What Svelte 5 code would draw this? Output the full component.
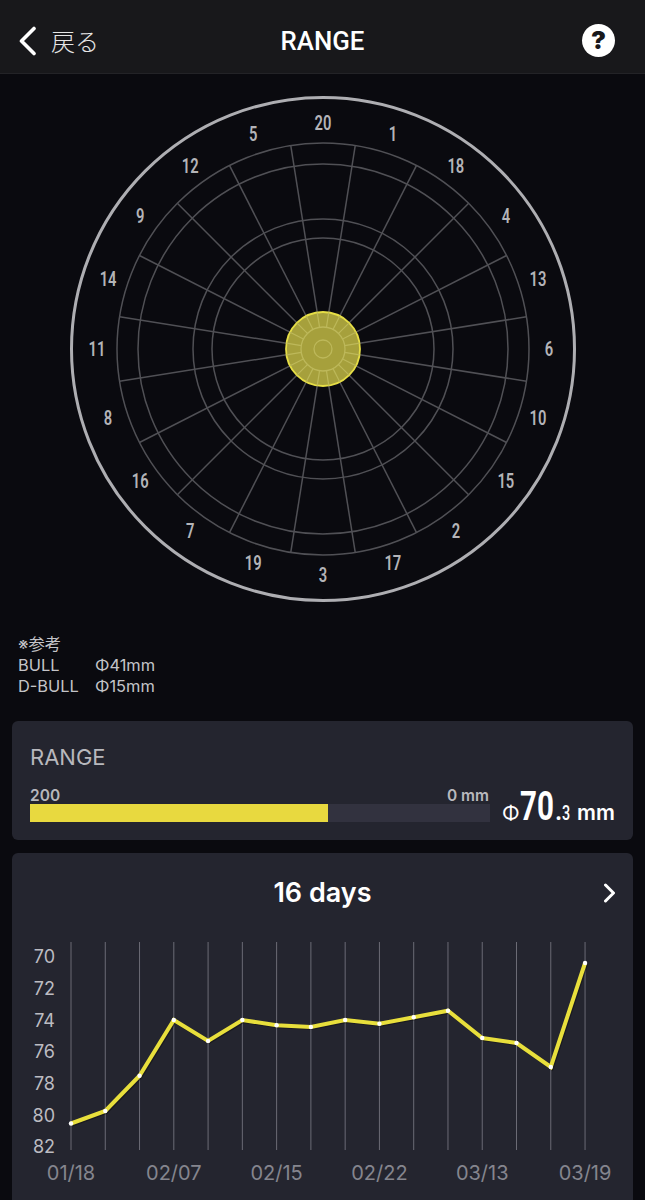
<script>
  const CX = 323, CY = 275;
  const numbers = [20,1,18,4,13,6,10,15,2,17,3,19,7,16,8,11,14,9,12,5];
  const polar = (r, deg) => {
    const a = (deg * Math.PI) / 180;
    return [+(CX + r * Math.sin(a)).toFixed(2), +(CY - r * Math.cos(a)).toFixed(2)];
  };
  const spokes = numbers.map((_, i) => {
    const d = 9 + i * 18;
    const [x1, y1] = polar(37, d);
    const [x2, y2] = polar(206, d);
    const [x3, y3] = polar(22, d);
    return { x1, y1, x2, y2, x3, y3 };
  });
  const labels = numbers.map((n, i) => {
    const [x, y] = polar(226, i * 18);
    return { n, x, y };
  });

  const ys = [1123.5,1111,1075.7,1020,1041,1020,1025.3,1027,1020,1023.7,1017.3,1010.7,1038,1043,1067,963];
  const OX = 59;
  const xAt = (i) => +(i * 34.27).toFixed(2) + OX;
  const points = ys.map((y, i) => ({ x: xAt(i), y: y - 930 }));
  const line = points.map((p) => `${p.x},${p.y}`).join(' ');
  const yLabels = [[70,957],[72,989],[74,1021],[76,1052],[78,1084],[80,1116],[82,1147]];
  const xLabels = [['01/18',0],['02/07',3],['02/15',6],['02/22',9],['03/13',12],['03/19',15]];
</script>

<div class="page">
  <header class="top">
    <button class="back">
      <svg width="20" height="30" viewBox="0 0 20 30"><path d="M16 2.5 3.5 15 16 27.500" fill="none" stroke="#fff" stroke-width="3.600" stroke-linecap="round" stroke-linejoin="round"/></svg>
      <span>戻る</span>
    </button>
    <h1>RANGE</h1>
    <div class="help">?</div>
  </header>

  <svg class="board" width="645" height="550" viewBox="0 0 645 550">
    <circle cx={CX} cy={CY} r="251.500" class="outer"/>
    {#each [206,185,130,111] as r}
      <circle cx={CX} cy={CY} {r} class="ring"/>
    {/each}
    {#each spokes as s}
      <line x1={s.x1} y1={s.y1} x2={s.x2} y2={s.y2} class="spoke"/>
    {/each}
    <circle cx={CX} cy={CY} r="37" class="bull"/>
    {#each spokes as s}
      <line x1={s.x3} y1={s.y3} x2={s.x1} y2={s.y1} class="bull-line"/>
    {/each}
    <circle cx={CX} cy={CY} r="22" class="bull-ring"/>
    <circle cx={CX} cy={CY} r="9" class="bull-ring"/>
    {#each labels as l}
      <text transform="translate({l.x} {l.y + 6.500}) scale(.72 1)" class="num">{l.n}</text>
    {/each}
  </svg>

  <section class="note">
    <div>※参考</div>
    <div class="row"><span>BULL</span><span>Φ41mm</span></div>
    <div class="row"><span>D-BULL</span><span>Φ15mm</span></div>
  </section>

  <section class="card range">
    <div class="title">RANGE</div>
    <div class="range-row">
      <div class="meter">
        <div class="scale"><span>200</span><span>0 mm</span></div>
        <div class="track"><div class="fill" style="width:64.800%"></div></div>
      </div>
      <div class="value">
        <span class="phi">Φ</span><span class="big">70</span><span class="dot">.</span><span class="small">3</span><span class="mm">mm</span>
      </div>
    </div>
  </section>

  <section class="card trend">
    <div class="trend-head">
      <span>16 days</span>
      <svg class="next" width="14" height="20" viewBox="0 0 14 20"><path d="M2.500 2 10.500 10 2.500 18" fill="none" stroke="#fff" stroke-width="3" stroke-linecap="round" stroke-linejoin="round"/></svg>
    </div>
    <svg class="chart" width="621" height="270" viewBox="0 0 621 270">
      {#each points as p}
        <line x1={p.x} x2={p.x} y1="12" y2="220" class="grid"/>
      {/each}
      <polyline points={line} class="shade"/>
      <polyline points={line} class="trace"/>
      {#each points as p}
        <circle cx={p.x} cy={p.y} r="2.200" class="pt"/>
      {/each}
      {#each yLabels as [v, y]}
        <text x="43" y={y - 930 + 5.500} class="ylab">{v}</text>
      {/each}
      {#each xLabels as [t, i]}
        <text x={xAt(i)} y="250" class="xlab">{t}</text>
      {/each}
    </svg>
  </section>
</div>

<style>
  :global(body) {
    margin: 0;
    background: #0a0a0f;
  }
  .page {
    width: 645px;
    height: 1200px;
    overflow: hidden;
    background: #0a0a0f;
    font-family: Inter, "Noto Sans CJK JP", sans-serif;
    display: flex;
    flex-direction: column;
  }
  .top {
    flex: none;
    height: 65px;
    padding: 8px 30px 0;
    background: #18181b;
    border-bottom: 1px solid #232327;
    display: grid;
    grid-template-columns: 1fr auto 1fr;
    align-items: center;
    color: #fff;
  }
  .back {
    all: unset;
    margin-left: -12px;
    display: flex;
    align-items: center;
    gap: 13px;
    color: #e6e6e6;
    font-size: 24px;
    font-weight: 300;
    font-family: "Noto Sans CJK JP", sans-serif;
  }
  h1 {
    margin: 0;
    font: 500 25.800px Roboto, sans-serif;
    color: #fff;
  }
  .help {
    justify-self: end;
    width: 33px;
    height: 33px;
    border-radius: 50%;
    background: #fff;
    color: #18181b;
    font: 900 25px/33px Inter, sans-serif;
    text-align: center;
  }
  .board {
    flex: none;
    display: block;
  }
  .outer {
    fill: none;
    stroke: #aeaeb2;
    stroke-width: 3;
  }
  .ring {
    fill: none;
    stroke: #505055;
    stroke-width: 1.500;
  }
  .spoke {
    stroke: #505055;
    stroke-width: 1.500;
  }
  .bull {
    fill: #a6a03c;
    stroke: #e6de46;
    stroke-width: 1.800;
  }
  .bull-line {
    stroke: #bdb85a;
    stroke-width: 1.200;
  }
  .bull-ring {
    fill: none;
    stroke: #bdb85a;
    stroke-width: 1.300;
  }
  .num {
    font: 600 20.500px Roboto, sans-serif;
    fill: #b4b4b8;
    text-anchor: middle;
  }
  .note {
    flex: none;
    margin-top: 10px;
    padding-left: 18px;
    font-size: 16.400px;
    line-height: 21px;
    color: #c4c4c8;
    height: 87px;
  }
  .row {
    display: grid;
    grid-template-columns: 77px auto;
  }
  .card {
    flex: none;
    margin: 0 12px;
    background: #24252f;
    border-radius: 6px;
  }
  .range {
    height: 119px;
    box-sizing: border-box;
    padding: 24px 18px 0;
  }
  .title {
    font-size: 22px;
    line-height: 24px;
    color: #b8b8bd;
  }
  .range-row {
    margin-top: 17px;
    display: flex;
    align-items: flex-end;
  }
  .meter {
    width: 460px;
    flex: none;
  }
  .scale {
    display: flex;
    justify-content: space-between;
    padding-right: 1px;
    font-size: 15.500px;
    line-height: 18px;
    font-weight: 600;
    color: #b8b8bd;
    transform: translateY(1px);
  }
  .track {
    height: 18px;
    background: #32323f;
  }
  .fill {
    height: 100%;
    background: #e8d93f;
  }
  .value {
    margin-left: 12px;
    display: flex;
    align-items: baseline;
    color: #fff;
    height: 32px;
    line-height: 32px;
    white-space: nowrap;
  }
  .phi {
    font-size: 20px;
    width: 18px;
  }
  .big, .small {
    display: inline-block;
    font-family: Roboto, sans-serif;
    font-weight: 700;
    transform-origin: left bottom;
  }
  .big {
    font-size: 41px;
    width: 35px;
    transform: scaleX(.72);
  }
  .dot {
    font-size: 20px;
    font-weight: 800;
    width: 7px;
  }
  .small {
    font-size: 20px;
    width: 10px;
    transform: scaleX(.72);
    font-weight: 500;
  }
  .mm {
    font-size: 21px;
    font-weight: 600;
    margin-left: 5px;
  }
  .trend {
    margin-top: 13px;
    height: 360px;
    overflow: hidden;
  }
  .trend-head {
    height: 79px;
    margin-bottom: -2px;
    display: flex;
    align-items: center;
    justify-content: center;
    position: relative;
    font-size: 27px;
    font-weight: 600;
    color: #fff;
  }
  .next {
    position: absolute;
    right: 16px;
    top: 30px;
  }
  .chart {
    display: block;
  }
  .grid {
    stroke: #6b6b75;
    stroke-width: 1;
  }
  .shade {
    fill: none;
    stroke: #0d0d12;
    stroke-opacity: .5;
    stroke-width: 4;
    transform: translate(1px, 1px);
  }
  .trace {
    fill: none;
    stroke: #e8df3c;
    stroke-width: 4;
    stroke-linejoin: miter;
  }
  .pt {
    fill: #fff;
  }
  .ylab {
    font-size: 18px;
    fill: #bcbcc2;
    text-anchor: end;
  }
  .xlab {
    font-size: 20px;
    fill: #85858e;
    text-anchor: middle;
  }
</style>
